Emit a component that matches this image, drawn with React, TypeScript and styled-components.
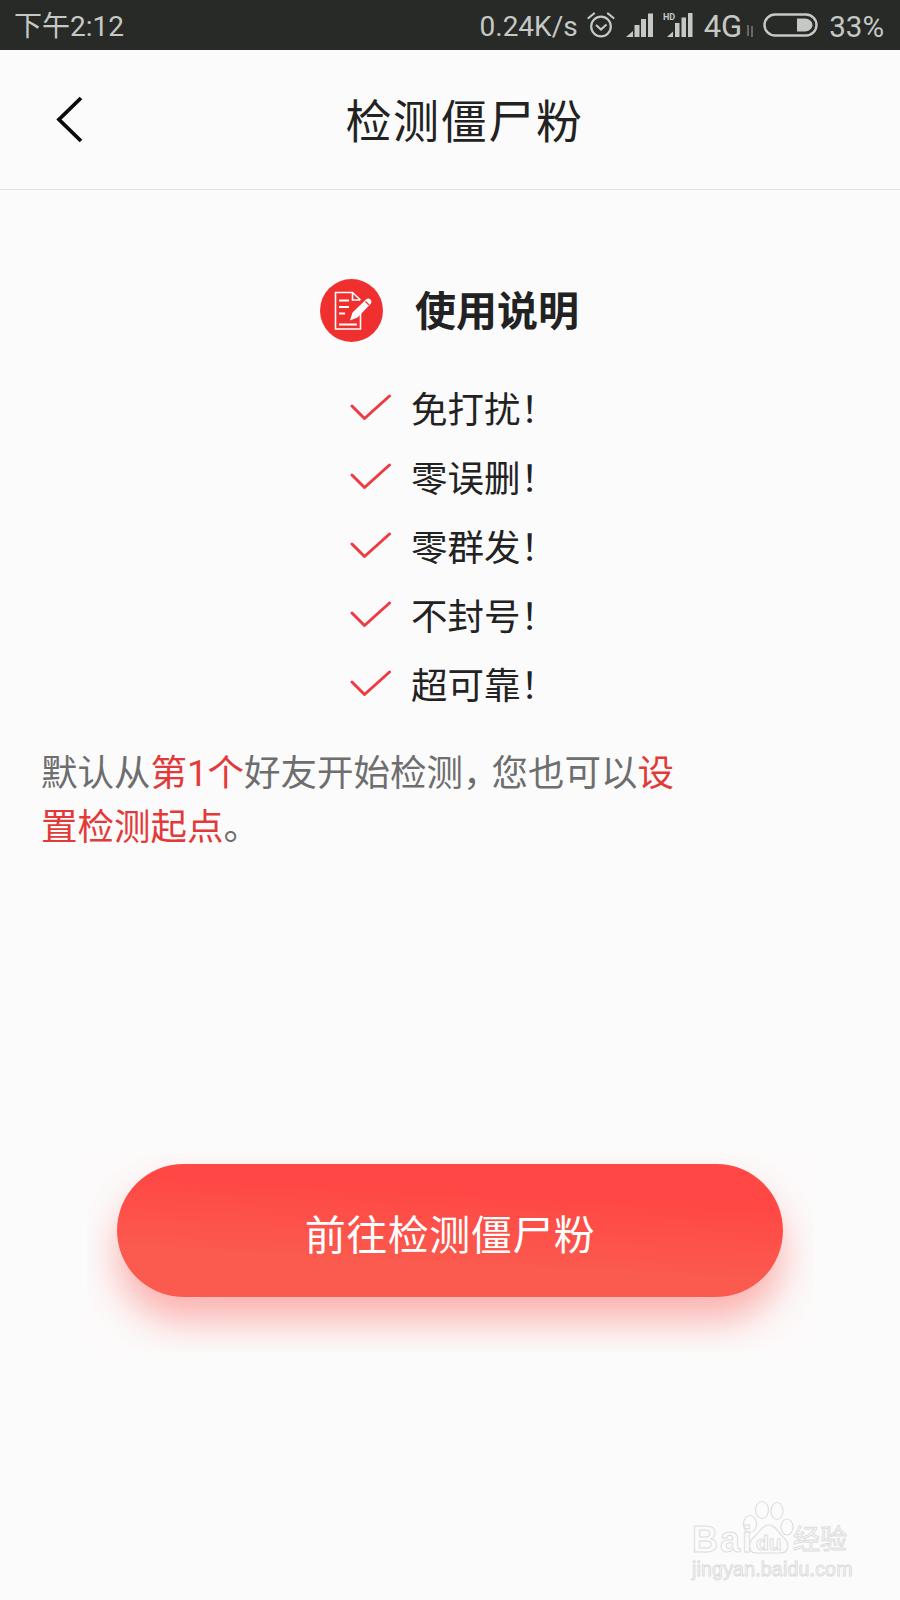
import React from "react";
import styled, { createGlobalStyle } from "styled-components";

const CJK = `"Roboto", "Noto Sans CJK SC", sans-serif`;

const Global = createGlobalStyle`
  html, body { margin: 0; padding: 0; background: #fbfbfc; }
  body { font-family: ${CJK}; }
`;

const Page = styled.div`
  position: relative;
  width: 900px;
  height: 1600px;
  overflow: hidden;
  background: #fbfbfc;
  display: flex;
  flex-direction: column;
`;

const StatusBar = styled.div`
  height: 50px;
  background: #282a27;
  color: #c6c8c5;
  display: flex;
  align-items: center;
  justify-content: space-between;
  padding: 0 16px 0 14px;
  font-size: 28px;
  flex: none;
`;

const StatusGroup = styled.div`
  display: flex;
  align-items: center;
`;

const StatusText = styled.span<{ $ml?: number; $size?: number }>`
  margin-left: ${(p) => p.$ml ?? 0}px;
  margin-top: 4px;
  font-size: ${(p) => p.$size ?? 28}px;
  line-height: 46px;
`;

const StatusIcon = styled.svg<{ $ml?: number }>`
  margin-left: ${(p) => p.$ml ?? 0}px;
  flex: none;
`;

const Header = styled.header`
  height: 139px;
  flex: none;
  background: #fbfbfb;
  border-bottom: 1px solid #e2e2e2;
  display: flex;
  align-items: center;
  justify-content: center;
  position: relative;
`;

const BackIcon = styled.svg`
  position: absolute;
  left: 55px;
  top: 45px;
`;

const Title = styled.h1`
  margin: 0 0 4px 29px;
  font-weight: 400;
  font-size: 46px;
  letter-spacing: 1.6px;
  color: #222;
`;

const Body = styled.main`
  flex: 1;
  display: flex;
  flex-direction: column;
`;

const GuideHead = styled.div`
  margin-top: 89px;
  margin-left: 320px;
  display: flex;
  align-items: center;
  gap: 32px;
`;

const GuideTitle = styled.h2`
  margin: 4px 0 0;
  font-size: 41px;
  font-weight: 700;
  line-height: 59px;
  color: #222;
`;

const Checks = styled.ul`
  list-style: none;
  margin: 31px 0 0 350px;
  padding: 0;
  display: flex;
  flex-direction: column;
`;

const CheckRow = styled.li`
  height: 69px;
  display: flex;
  align-items: center;
  gap: 19px;
  font-size: 36.5px;
  color: #222;
`;

const Note = styled.p`
  margin: 29px 0 0 41px;
  width: 640px;
  font-size: 36.5px;
  line-height: 54px;
  color: #6e6e6e;
`;

const Mark = styled.span`
  color: #e23a38;
`;

const Comma = styled.span`
  letter-spacing: -8px;
`;

const ButtonPlate = styled.div`
  margin: 298px 0 0 87px;
  width: 727px;
  height: 200px;
  flex: none;
  box-sizing: border-box;
  padding: 11px 31px 0 30px;
  background: #fcfafa;
  overflow: hidden;
`;

const CtaButton = styled.button`
  display: block;
  width: 666px;
  height: 133px;
  border: 0;
  border-radius: 67px;
  background: linear-gradient(183deg, #ff4845 0%, #ff4845 28%, #fb5a4e 70%, #fb5a4e 100%);
  box-shadow: 0 24px 36px 0 rgba(250, 80, 75, 0.42);
  color: #fff;
  font-family: ${CJK};
  font-size: 41px;
  letter-spacing: 0.5px;
  padding: 2px 0 0;
`;

const Watermark = styled.div`
  position: absolute;
  left: 690px;
  top: 1500px;
  width: 170px;
  height: 82px;
  color: #fbfbfc;
  font-family: "Liberation Sans", "Noto Sans CJK SC", sans-serif;
  -webkit-text-stroke: 1px #dedede;
`;

const WmBrand = styled.span`
  position: absolute;
  left: 2px;
  top: 20px;
  font-size: 36px;
  font-weight: 700;
  letter-spacing: 2px;
  line-height: 40px;
`;

const WmDu = styled.span`
  position: absolute;
  left: 66px;
  top: 31px;
  font-size: 21px;
  font-weight: 700;
  line-height: 24px;
`;

const WmCn = styled.span`
  position: absolute;
  left: 103px;
  top: 25px;
  font-size: 27px;
  line-height: 30px;
  white-space: nowrap;
`;

const WmUrl = styled.span`
  position: absolute;
  left: 2px;
  top: 58px;
  font-size: 19.5px;
  letter-spacing: 0.2px;
  line-height: 22px;
  white-space: nowrap;
`;

const WmPaw = styled.svg`
  position: absolute;
  left: 50px;
  top: 0;
`;

const Check = () => (
  <svg width="42" height="30" viewBox="0 0 42 30" fill="none">
    <path d="M2 13L14.5 25.5L39.5 3" stroke="#ee3b41" strokeWidth="3" strokeLinecap="round" strokeLinejoin="round" />
  </svg>
);

const GuideIcon = () => (
  <svg width="63" height="63" viewBox="0 0 63 63" fill="none">
    <circle cx="31.5" cy="31.5" r="31.5" fill="#ef302e" />
    <path d="M40.5 27V50H15.5V13.5H32.5L40.5 21" stroke="#fff" strokeWidth="1.6" />
    <path d="M32.5 13.5V21H40" stroke="#fff" strokeWidth="1.6" />
    <path d="M19 21.5H29M19 28H29M19 34.5H25M19 45.5H37" stroke="#fff" strokeWidth="1.8" />
    <path d="M30 41.5L32.5 33.5L46 20.5C47 19.5 49 19 50.5 20.5C52 22 51.5 24 50.5 25L37.5 38.5Z" fill="#fff" />
    <path d="M45.5 22.5L49 26" stroke="#ef302e" strokeWidth="1.3" />
  </svg>
);

const Alarm = () => (
  <StatusIcon $ml={9} width="28" height="26" viewBox="0 0 28 26">
    <g fill="none" stroke="#c6c8c5" strokeWidth="2.2">
      <circle cx="14" cy="14.5" r="9.8" />
      <path d="M9 13L14 17.5L19.5 12.5" />
      <path d="M1.5 6L7 1.5M26.5 6L21 1.5" strokeLinecap="round" />
    </g>
  </StatusIcon>
);

const Signal = ({ hd }: { hd?: boolean }) => (
  <StatusIcon $ml={hd ? 9 : 11} width={hd ? 30 : 28} height="26" viewBox={hd ? "0 0 30 26" : "0 0 28 26"} fill="#c6c8c5">
    {hd ? (
      <>
        <text x="0" y="8" fontSize="9" fontWeight="700" fontFamily="Roboto, sans-serif" fill="#c6c8c5">
          HD
        </text>
        <path d="M4 25L10 19.5V25Z" />
        <rect x="12" y="11" width="4.5" height="14" />
        <rect x="18.5" y="5.5" width="4.5" height="19.5" />
        <rect x="25" y="1" width="4.5" height="24" />
      </>
    ) : (
      <>
        <path d="M0 25L7 19V25Z" />
        <rect x="8.5" y="13" width="5" height="12" />
        <rect x="15" y="7" width="5" height="18" />
        <rect x="22" y="1.5" width="5" height="23.5" />
      </>
    )}
  </StatusIcon>
);

const Battery = () => (
  <StatusIcon $ml={8} width="55" height="26" viewBox="0 0 55 26" fill="none">
    <rect x="1.5" y="2.5" width="52" height="21" rx="10.5" stroke="#c6c8c5" strokeWidth="2.4" />
    <path d="M34 6.5H42C46 6.5 49.5 9.5 49.5 13C49.5 16.5 46 19.5 42 19.5H34Z" fill="#c6c8c5" />
  </StatusIcon>
);

const Arrows = () => (
  <StatusIcon $ml={3} width="10" height="12" viewBox="0 0 10 12" style={{ marginTop: 12 }}>
    <path d="M3 0V11M7 1V12" stroke="#7b7d7a" strokeWidth="1.5" />
  </StatusIcon>
);

const checks = ["免打扰！", "零误删！", "零群发！", "不封号！", "超可靠！"];

export default function App() {
  return (
    <Page>
      <Global />
      <StatusBar>
        <StatusText>下午2:12</StatusText>
        <StatusGroup>
          <StatusText>0.24K/s</StatusText>
          <Alarm />
          <Signal />
          <Signal hd />
          <StatusText $ml={11} $size={31}>4G</StatusText>
          <Arrows />
          <Battery />
          <StatusText $ml={11} $size={29.5}>33%</StatusText>
        </StatusGroup>
      </StatusBar>
      <Header>
        <BackIcon width="32" height="48" viewBox="0 0 32 48" fill="none">
          <path d="M26 3L4 24.5L26 46" stroke="#0a0a0a" strokeWidth="3.8" />
        </BackIcon>
        <Title>检测僵尸粉</Title>
      </Header>
      <Body>
        <GuideHead>
          <GuideIcon />
          <GuideTitle>使用说明</GuideTitle>
        </GuideHead>
        <Checks>
          {checks.map((c) => (
            <CheckRow key={c}>
              <Check />
              {c}
            </CheckRow>
          ))}
        </Checks>
        <Note>
          默认从<Mark>第1个</Mark>好友开始检测<Comma>，</Comma>您也可以<Mark>设</Mark>
          <Mark>置检测起点</Mark>。
        </Note>
        <ButtonPlate>
          <CtaButton>前往检测僵尸粉</CtaButton>
        </ButtonPlate>
      </Body>
      <Watermark>
        <WmPaw width="60" height="60" viewBox="0 0 60 60" fill="#fbfbfc" stroke="#dedede" strokeWidth="1.2">
          <ellipse cx="10" cy="24" rx="6.5" ry="8.5" />
          <ellipse cx="22" cy="10" rx="6.5" ry="8.5" />
          <ellipse cx="37" cy="11" rx="6" ry="8.5" />
          <ellipse cx="47" cy="27" rx="6" ry="8" />
          <path d="M29 25C36 25 38 33 44 38C50 43 49 53 41 53H16C8 53 8 43 13 38C19 33 22 25 29 25Z" />
        </WmPaw>
        <WmBrand>Bai</WmBrand>
        <WmDu>du</WmDu>
        <WmCn>经验</WmCn>
        <WmUrl>jingyan.baidu.com</WmUrl>
      </Watermark>
    </Page>
  );
}
